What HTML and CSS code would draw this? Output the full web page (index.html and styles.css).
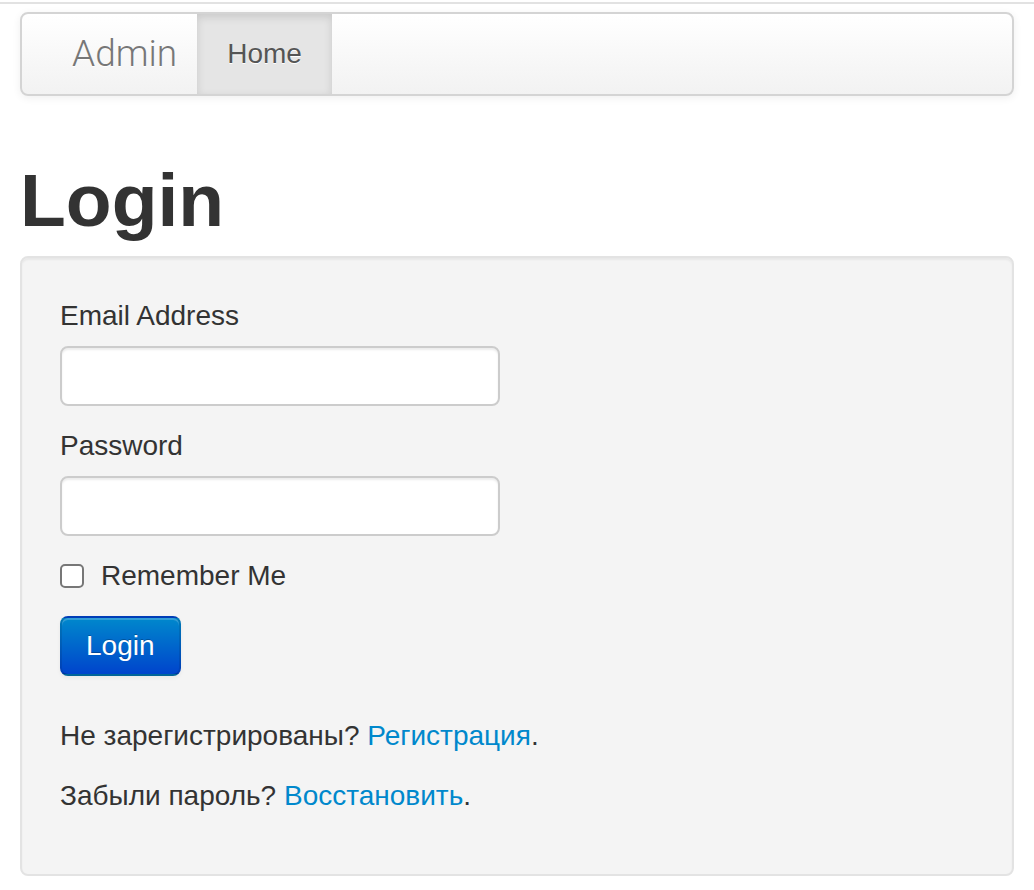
FILE: index.html
```html
<!DOCTYPE html>
<html lang="ru">
<head>
    <meta charset="UTF-8">
    <meta name="viewport" content="width=device-width, initial-scale=1.0">
    <title>Login</title>
    <link rel="stylesheet" href="styles.css">
</head>
<body>
    <div class="topline"></div>
    <div class="container">
        <!-- Навигация -->
        <div class="navbar">
            <a class="brand" href="#">Admin</a>
            <ul class="nav">
                <li class="active"><a href="#">Home</a></li>
            </ul>
        </div>

        <h1>Login</h1>

        <div class="well">
            <form class="login-form">
                <label for="email">Email Address</label>
                <input type="text" id="email" class="field">

                <label for="password">Password</label>
                <input type="password" id="password" class="field">

                <label class="checkbox">
                    <input type="checkbox"> Remember Me
                </label>

                <button type="submit" class="btn-primary">Login</button>
            </form>

            <p>Не зарегистрированы? <a href="#">Регистрация</a>.</p>
            <p>Забыли пароль? <a href="#">Восстановить</a>.</p>
        </div>
    </div>
</body>
</html>
```

FILE: styles.css
```css
body {
    margin: 0;
    font-family: "Liberation Sans", Arial, sans-serif;
    font-size: 28px;
    line-height: 40px;
    color: #333;
    background-color: #fff;
}
a {
    color: #0088cc;
    text-decoration: none;
}
.topline {
    margin-top: 2px;
    height: 2px;
    background-color: #e2e2e2;
}
.container {
    padding: 0 20px;
}

/* Навигация */
.navbar {
    display: flex;
    align-items: stretch;
    height: 80px;
    margin-top: 8px;
    border: 2px solid #d4d4d4;
    border-radius: 8px;
    background-image: linear-gradient(to bottom, #ffffff, #f2f2f2);
    box-shadow: 0 2px 8px rgba(0, 0, 0, 0.065);
    overflow: hidden;
}
.brand {
    display: block;
    padding: 0 20px 0 50px;
    font-family: Roboto, "Liberation Sans", sans-serif;
    font-size: 37px;
    font-weight: 300;
    line-height: 80px;
    color: #777;
    text-shadow: 0 1px 0 #fff;
}
.nav {
    display: flex;
    margin: 0;
    padding: 0;
    list-style: none;
}
.nav a {
    display: block;
    padding: 0 30px;
    line-height: 80px;
    color: #555;
    text-shadow: 0 1px 0 #fff;
}
.nav .active a {
    background-color: #e5e5e5;
    box-shadow: inset 0 3px 8px rgba(0, 0, 0, 0.125);
}

h1 {
    margin: 64px 0 16px;
    font-size: 75px;
    line-height: 80px;
    font-weight: bold;
    color: #333;
}

/* Форма */
.well {
    padding: 38px;
    background-color: #f4f4f4;
    border: 2px solid #e3e3e3;
    border-radius: 8px;
    box-shadow: inset 0 2px 2px rgba(0, 0, 0, 0.05);
}
.login-form {
    display: flex;
    flex-direction: column;
    align-items: flex-start;
    margin: 0 0 40px;
}
.login-form label {
    display: block;
    margin-bottom: 10px;
}
.field {
    box-sizing: border-box;
    width: 440px;
    height: 60px;
    margin: 0 0 20px;
    padding: 8px 12px;
    font: inherit;
    background-color: #fff;
    border: 2px solid #ccc;
    border-radius: 8px;
    box-shadow: inset 0 2px 2px rgba(0, 0, 0, 0.075);
}
.login-form .checkbox {
    display: flex;
    align-items: center;
    gap: 17px;
    margin-bottom: 20px;
}
.checkbox input {
    appearance: none;
    width: 24px;
    height: 24px;
    margin: 0;
    background: #fff;
    border: 2px solid #777;
    border-radius: 5px;
}
.btn-primary {
    height: 60px;
    padding: 0 24px;
    font: inherit;
    color: #fff;
    text-shadow: 0 -1px 0 rgba(0, 0, 0, 0.25);
    background-image: linear-gradient(to bottom, #0088cc, #0044cc);
    border: 2px solid #0044aa;
    border-color: rgba(0, 0, 0, 0.1) rgba(0, 0, 0, 0.1) rgba(0, 0, 0, 0.25);
    border-radius: 8px;
    box-shadow: inset 0 2px 0 rgba(255, 255, 255, 0.2), 0 2px 4px rgba(0, 0, 0, 0.05);
    cursor: pointer;
}
.well p {
    margin: 0 0 20px;
}
```
